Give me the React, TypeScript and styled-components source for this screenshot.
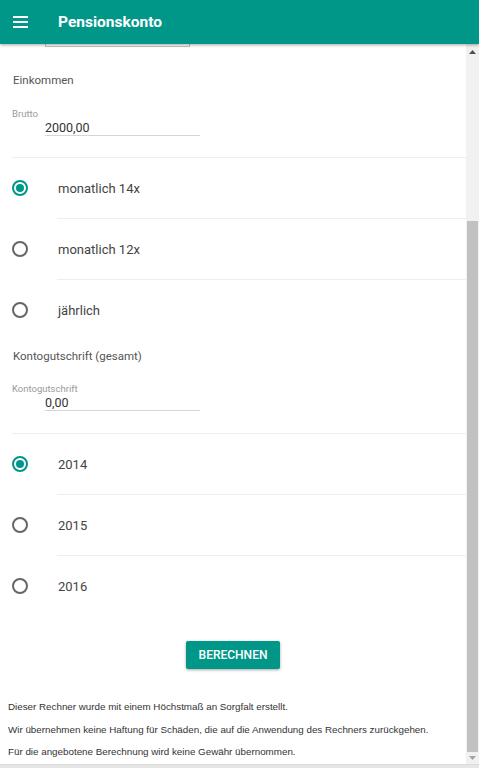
import React from "react";
import styled, { createGlobalStyle } from "styled-components";

const Global = createGlobalStyle`
  html, body { margin: 0; padding: 0; background: #fff; }
  body { font-family: Roboto, "Liberation Sans", Arial, sans-serif; overflow: hidden; }
  * { box-sizing: border-box; }
`;

const Shell = styled.div`
  width: 479px;
  height: 768px;
  display: flex;
  flex-direction: column;
  overflow: hidden;
`;

const AppBar = styled.header`
  height: 44px;
  flex: 0 0 44px;
  background: #009688;
  display: flex;
  align-items: center;
  padding-left: 13px;
  box-shadow: 0 1px 3px rgba(0, 0, 0, 0.35);
  position: relative;
  z-index: 2;
`;

const Title = styled.h1`
  margin: 0 0 0 30px;
  font-family: Roboto, "Liberation Sans", sans-serif;
  font-size: 15.5px;
  font-weight: 700;
  color: #fff;
  letter-spacing: 0;
`;

const Body = styled.div`
  flex: 1;
  display: flex;
  min-height: 0;
`;

const Content = styled.main`
  flex: 1;
  display: flex;
  flex-direction: column;
  overflow: hidden;
`;

const PartialBox = styled.div`
  margin-left: 45px;
  width: 145px;
  height: 3px;
  border: 1px solid #c4c4c4;
  border-top: none;
`;

const SectionTitle = styled.div<{ $top: number }>`
  margin: ${(p) => p.$top}px 0 0 13px;
  font-size: 11.5px;
  line-height: 16px;
  color: #555;
`;

const Field = styled.div<{ $top: number }>`
  margin: ${(p) => p.$top}px 0 0 12px;
  display: flex;
  flex-direction: column;
`;

const FieldLabel = styled.label`
  font-size: 9.5px;
  line-height: 12px;
  color: #9a9a9a;
`;

const FieldValue = styled.div`
  margin-left: 33px;
  width: 155px;
  font-size: 12.5px;
  line-height: 15px;
  color: #333;
  border-bottom: 1px solid #d6d6d6;
`;

const Divider = styled.div<{ $top: number; $inset?: boolean }>`
  margin-top: ${(p) => p.$top}px;
  margin-left: ${(p) => (p.$inset ? 57 : 12)}px;
  height: 1px;
  background: #eeeeee;
`;

const RadioRow = styled.label`
  height: 60px;
  display: flex;
  align-items: center;
  padding-left: 12px;
  font-size: 13px;
  color: #444;
  cursor: pointer;
`;

const RadioCircle = styled.span<{ $checked?: boolean }>`
  width: 16px;
  height: 16px;
  border-radius: 50%;
  border: 2px solid ${(p) => (p.$checked ? "#009688" : "#666")};
  display: flex;
  align-items: center;
  justify-content: center;
  margin-right: 30px;
  flex: 0 0 16px;
  &::after {
    content: "";
    width: 8px;
    height: 8px;
    border-radius: 50%;
    background: ${(p) => (p.$checked ? "#009688" : "transparent")};
  }
`;

const ButtonRow = styled.div`
  margin-top: 25px;
  display: flex;
  justify-content: center;
`;

const Button = styled.button`
  width: 94px;
  height: 28px;
  background: #009688;
  color: #fff;
  border: none;
  border-radius: 2px;
  font-family: Roboto, "Liberation Sans", sans-serif;
  font-size: 12px;
  font-weight: 500;
  padding: 0;
  box-shadow: 0 1px 3px rgba(0, 0, 0, 0.35);
`;

const Footer = styled.div`
  margin-top: 32px;
  padding-left: 8px;
  display: flex;
  flex-direction: column;
  gap: 10.5px;
`;

const Note = styled.p`
  margin: 0;
  font-family: "Liberation Sans", Arial, sans-serif;
  font-size: 9.8px;
  line-height: 12px;
  color: #333;
`;

const ScrollTrack = styled.div`
  width: 13px;
  flex: 0 0 13px;
  background: #f1f1f1;
  display: flex;
  flex-direction: column;
  align-items: center;
`;

const ArrowBox = styled.div<{ $grow?: boolean }>`
  height: 16px;
  width: 100%;
  display: flex;
  align-items: center;
  justify-content: center;
  flex: ${(p) => (p.$grow ? 1 : "0 0 16px")};
`;

const Spacer = styled.div`
  flex: 0 0 161px;
`;

const Thumb = styled.div`
  width: 11px;
  height: 531px;
  flex: 0 0 531px;
  background: #c1c1c1;
`;

const BottomStrip = styled.div`
  height: 4px;
  flex: 0 0 4px;
  background: #e6e6e6;
  border-top: 1px solid #dadada;
`;

const Hamburger = () => (
  <svg width="15" height="12" viewBox="0 0 15 12" aria-hidden>
    <rect x="0" y="0" width="15" height="2" fill="#fff" />
    <rect x="0" y="5" width="15" height="2" fill="#fff" />
    <rect x="0" y="10" width="15" height="2" fill="#fff" />
  </svg>
);

const Arrow = ({ up }: { up?: boolean }) => (
  <svg width="7" height="4" viewBox="0 0 7 4" aria-hidden>
    {up ? (
      <polygon points="0,4 7,4 3.5,0" fill="#505050" />
    ) : (
      <polygon points="0,0 7,0 3.5,4" fill="#a3a3a3" />
    )}
  </svg>
);

type Opt = { label: string; checked?: boolean };

const RadioGroup = ({ options }: { options: Opt[] }) => (
  <>
    {options.map((o, i) => (
      <React.Fragment key={o.label}>
        {i > 0 && <Divider $top={0} $inset />}
        <RadioRow>
          <RadioCircle $checked={o.checked} />
          {o.label}
        </RadioRow>
      </React.Fragment>
    ))}
  </>
);

export default function App() {
  return (
    <Shell>
      <Global />
      <AppBar>
        <Hamburger />
        <Title>Pensionskonto</Title>
      </AppBar>
      <Body>
        <Content>
          <PartialBox />
          <SectionTitle $top={25}>Einkommen</SectionTitle>
          <Field $top={20}>
            <FieldLabel>Brutto</FieldLabel>
            <FieldValue>2000,00</FieldValue>
          </Field>
          <Divider $top={21} />
          <RadioGroup
            options={[
              { label: "monatlich 14x", checked: true },
              { label: "monatlich 12x" },
              { label: "jährlich" },
            ]}
          />
          <SectionTitle $top={8}>Kontogutschrift (gesamt)</SectionTitle>
          <Field $top={19}>
            <FieldLabel>Kontogutschrift</FieldLabel>
            <FieldValue>0,00</FieldValue>
          </Field>
          <Divider $top={22} />
          <RadioGroup
            options={[
              { label: "2014", checked: true },
              { label: "2015" },
              { label: "2016" },
            ]}
          />
          <ButtonRow>
            <Button>BERECHNEN</Button>
          </ButtonRow>
          <Footer>
            <Note>Dieser Rechner wurde mit einem Höchstmaß an Sorgfalt erstellt.</Note>
            <Note>Wir übernehmen keine Haftung für Schäden, die auf die Anwendung des Rechners zurückgehen.</Note>
            <Note>Für die angebotene Berechnung wird keine Gewähr übernommen.</Note>
          </Footer>
        </Content>
        <ScrollTrack>
          <ArrowBox>
            <Arrow up />
          </ArrowBox>
          <Spacer />
          <Thumb />
          <ArrowBox $grow>
            <Arrow />
          </ArrowBox>
        </ScrollTrack>
      </Body>
      <BottomStrip />
    </Shell>
  );
}
